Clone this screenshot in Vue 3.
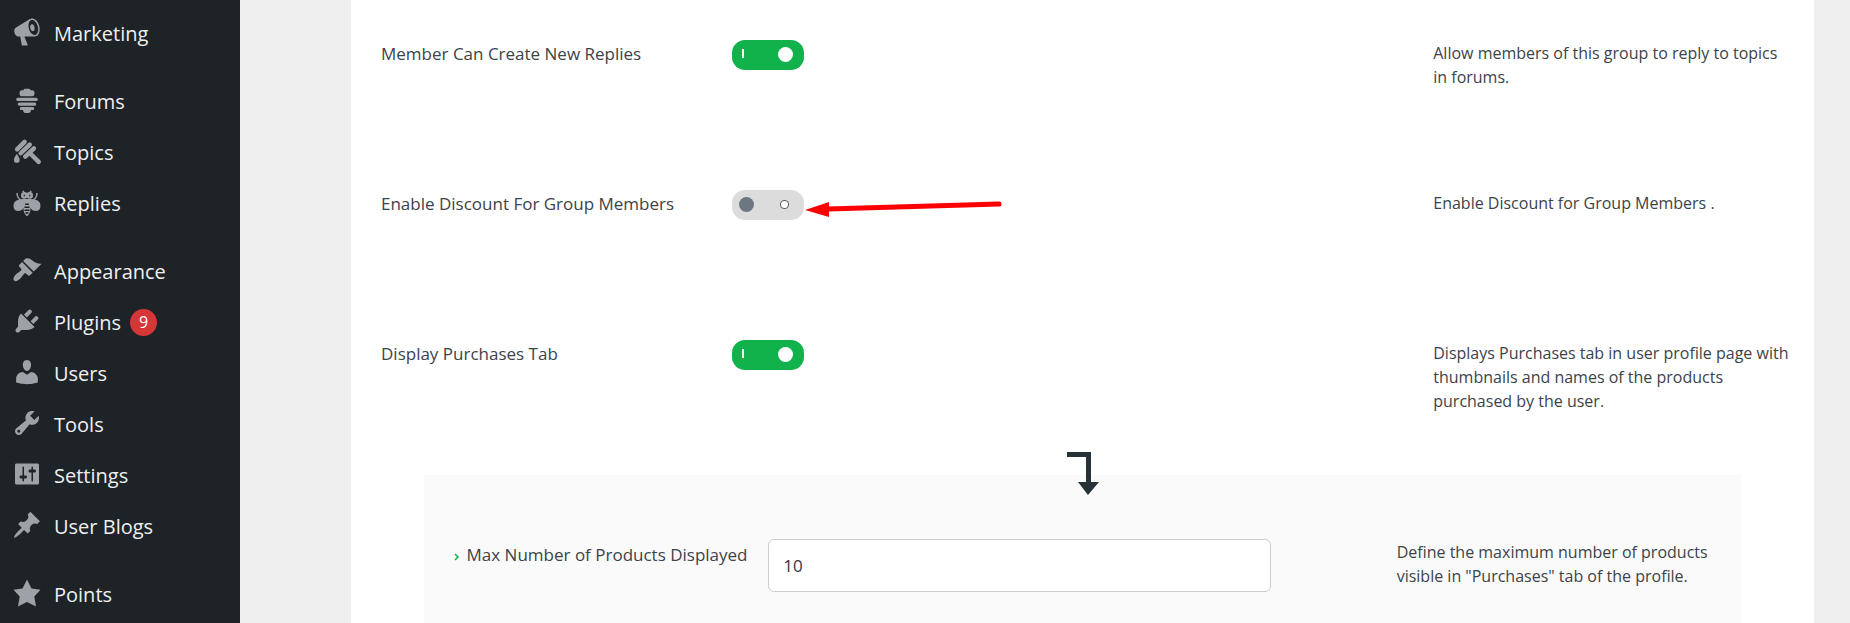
<script setup>
import { ref } from 'vue';

const menuGroups = [
  [{ id: 'marketing', label: 'Marketing' }],
  [
    { id: 'forums', label: 'Forums' },
    { id: 'topics', label: 'Topics' },
    { id: 'replies', label: 'Replies' },
  ],
  [
    { id: 'appearance', label: 'Appearance' },
    { id: 'plugins', label: 'Plugins', count: 9 },
    { id: 'users', label: 'Users' },
    { id: 'tools', label: 'Tools' },
    { id: 'settings', label: 'Settings' },
    { id: 'blogs', label: 'User Blogs' },
  ],
  [{ id: 'points', label: 'Points' }],
];

// 20x20 icons
const icons = {
  marketing: 'M18.15 5.94c.46 1.62.38 3.22-.02 4.48-.42 1.28-1.26 2.18-2.3 2.48-.16.06-.26.06-.4.06-.06.02-.12.02-.18.02-.06.02-.14.02-.22.02h-6.8l2.22 5.5c.02.14-.06.26-.14.34-.08.1-.24.16-.34.16H6.95c-.1 0-.26-.06-.34-.16-.08-.08-.16-.2-.14-.34l-1-5.5H4.25l-.02-.02c-.5.06-1.08-.18-1.54-.62s-.88-1.08-1.06-1.88c-.24-.8-.2-1.56-.02-2.2.18-.62.58-1.08 1.06-1.3l.02-.02 9-5.4c.1-.06.18-.1.24-.16.06-.04.14-.08.24-.12.16-.08.28-.12.5-.18 1.04-.3 2.24.1 3.22.98s1.84 2.24 2.26 3.86zm-2.58 5.98h-.02c.4-.1.74-.34 1.04-.7.58-.7.86-1.76.86-3.04 0-.64-.1-1.3-.28-1.98-.34-1.36-1.02-2.5-1.78-3.24s-1.68-1.1-2.46-.88c-.82.22-1.4.96-1.7 2-.32 1.04-.28 2.36.06 3.72.38 1.36 1 2.5 1.8 3.24.78.74 1.62 1.1 2.48.88zm-2.54-7.08c.22-.04.42-.02.62.04.38.16.76.48 1.02 1s.42 1.2.42 1.78c0 .3-.04.56-.12.8-.18.48-.44.84-.86.94-.34.1-.8-.06-1.14-.4s-.64-.86-.78-1.5c-.18-.62-.12-1.24.02-1.72s.48-.84.82-.94z',
  appearance: 'M14.48 11.06L7.41 3.99l1.5-1.5c.5-.56 2.3-.47 3.51.32 1.21.8 1.43 1.28 2.91 2.1 1.18.64 2.45 1.26 4.45.85zm-.71.71L6.7 4.7 4.93 6.47c-.39.39-.39 1.02 0 1.41l1.06 1.06c.39.39.39 1.03 0 1.42-.6.6-1.43 1.11-2.21 1.69-.35.26-.7.53-1.01.84C1.43 14.23.4 16.08 1.4 17.07c.99 1 2.84-.03 4.18-1.36.31-.31.58-.66.85-1.02.57-.78 1.08-1.61 1.69-2.21.39-.39 1.02-.39 1.41 0l1.06 1.06c.39.39 1.02.39 1.41 0z',
  plugins: 'M13.11 4.36L9.87 7.6 8 5.73l3.24-3.24c.35-.34 1.05-.2 1.56.32.52.51.66 1.21.31 1.55zm-8 1.77l.91-1.12 9.01 9.01-1.19.84c-.71.71-2.63 1.16-3.82 1.16H6.14L4.9 17.26c-.59.59-1.54.59-2.12 0-.59-.58-.59-1.53 0-2.12l1.24-1.24v-3.88c0-1.13.4-3.19 1.09-3.89zm7.26 3.97l3.24-3.24c.34-.35 1.04-.21 1.55.31.52.51.66 1.21.31 1.55l-3.24 3.25z',
  users: 'M10 9.25c-2.27 0-2.73-3.44-2.73-3.44C7 4.02 7.82 2 9.97 2c2.16 0 2.98 2.02 2.71 3.81 0 0-.41 3.44-2.68 3.44zm0 2.57L12.72 10c2.39 0 4.52 2.33 4.52 4.53v2.49s-3.65 1.13-7.24 1.13c-3.65 0-7.24-1.13-7.24-1.13v-2.49c0-2.25 1.94-4.48 4.47-4.48z',
  tools: 'M16.68 9.77c-1.34 1.34-3.3 1.67-4.95.99l-5.41 6.52c-.99.99-2.59.99-3.58 0s-.99-2.59 0-3.57l6.52-5.42c-.68-1.65-.35-3.61.99-4.95 1.28-1.28 3.12-1.62 4.72-1.06l-2.89 2.89 2.82 2.82 2.86-2.87c.53 1.58.18 3.39-1.08 4.65zM3.81 16.21c.4.39 1.04.39 1.43 0 .4-.4.4-1.04 0-1.43-.39-.4-1.03-.4-1.43 0-.39.39-.39 1.03 0 1.43z',
  settings: 'M18 16V4c0-.55-.45-1-1-1H3c-.55 0-1 .45-1 1v12c0 .55.45 1 1 1h14c.55 0 1-.45 1-1zM8 11h1c.55 0 1 .45 1 1s-.45 1-1 1H8v1.5c0 .28-.22.5-.5.5s-.5-.22-.5-.5V13H6c-.55 0-1-.45-1-1s.45-1 1-1h1V5.5c0-.28.22-.5.5-.5s.5.22.5.5V11zm5-2h-1c-.55 0-1-.45-1-1s.45-1 1-1h1V5.5c0-.28.22-.5.5-.5s.5.22.5.5V7h1c.55 0 1 .45 1 1s-.45 1-1 1h-1v5.5c0 .28-.22.5-.5.5s-.5-.22-.5-.5V9z',
  blogs: 'M10.44 3.02l1.82-1.82 6.36 6.35-1.83 1.82c-1.05-.68-2.48-.57-3.41.36l-.75.75c-.92.93-1.04 2.35-.35 3.41l-1.83 1.82-2.41-2.41-2.8 2.79c-.42.42-3.38 2.71-3.8 2.29s1.86-3.39 2.28-3.81l2.79-2.79L4.1 9.36l1.83-1.82c1.05.69 2.48.57 3.4-.36l.75-.75c.93-.92 1.05-2.35.36-3.41z',
  points: 'M10 1l3 6 6 .75-4.12 4.62L16 19l-6-3-6 3 1.13-6.63L1 7.75 7 7z',
};

const options = ref([
  {
    id: 'create-replies',
    label: 'Member Can Create New Replies',
    enabled: true,
    description: 'Allow members of this group to reply to topics in forums.',
  },
  {
    id: 'group-discount',
    label: 'Enable Discount For Group Members',
    enabled: false,
    highlighted: true,
    description: 'Enable Discount for Group Members .',
  },
  {
    id: 'purchases-tab',
    label: 'Display Purchases Tab',
    enabled: true,
    description: 'Displays Purchases tab in user profile page with thumbnails and names of the products purchased by the user.',
  },
]);

const maxProducts = ref('10');
</script>

<template>
  <div class="admin">
    <nav class="sidebar">
      <ul v-for="(group, index) in menuGroups" :key="index" class="menu-group">
        <li v-for="item in group" :key="item.id">
          <a href="#" class="menu-link">
            <svg class="menu-icon" viewBox="0 0 20 20" aria-hidden="true">
              <!-- Beehive -->
              <g v-if="item.id === 'forums'">
                <path d="M8.5 2.500h3q.8 0 .8 1h1.200q1.500 0 1.500 2t-1.500 2h-7Q5 7.500 5 5.500t1.500-2h1.200q0-1 .8-1z" />
                <rect x="2.800" y="8.500" width="14.400" height="2.200" rx="1.100" />
                <rect x="3.800" y="11.600" width="12.400" height="2.200" rx="1.100" />
                <path d="M6.200 14.700h7.600q1 0 1 1t-1 1h-1.200q0 2-1.600 2H9q-1.600 0-1.600-2H6.200q-1 0-1-1t1-1z" />
              </g>
              <!-- Honey dipper -->
              <g v-else-if="item.id === 'topics'">
                <path
                  d="M3.400 8.900l5-5M5.800 11.500l6-5.800M8.800 13.700l5.800-5.500M12.500 12l5.300 5.300"
                  fill="none"
                  stroke="currentColor"
                  stroke-linecap="round"
                  stroke-width="3"
                />
                <path d="M3.200 11.800c1 1.700 1.900 2.900 1.900 4.200a1.900 1.900 0 0 1-3.800 0c0-1.300.9-2.500 1.900-4.200z" />
              </g>
              <!-- Bee -->
              <g v-else-if="item.id === 'replies'">
                <path d="M9 8Q1 7.500 1 12.500 1 16 4.200 16q2.400 0 3.400-2 .2 4.200 2.400 5.500 2.200-1.300 2.400-5.500 1 2 3.400 2Q19 16 19 12.500 19 7.500 11 8z" />
                <circle cx="8.200" cy="5.600" r="2.200" />
                <circle cx="11.800" cy="5.600" r="2.200" />
                <path d="M8 3.800L7.300 2.500M12 3.800l.7-1.300M3.300 4q.2 4 4 5.500M16.700 4q-.2 4-4 5.500" fill="none" stroke="currentColor" />
                <path class="bee-marks" d="M8.800 11.500h2.400M8.300 13.500h3.400M8.300 15.500h3.400M9 17.300h2M7.800 5.600h.8M11.400 5.600h.8" />
              </g>
              <path v-else :d="icons[item.id]" fill-rule="evenodd" />
            </svg>
            <span>{{ item.label }}</span>
            <span v-if="item.count" class="menu-count">{{ item.count }}</span>
          </a>
        </li>
      </ul>
    </nav>

    <main class="panel">
      <div v-for="option in options" :key="option.id" class="option-row">
        <label class="option-label" :for="option.id">{{ option.label }}</label>
        <div class="switch">
          <input :id="option.id" v-model="option.enabled" type="checkbox" />
          <svg v-if="option.highlighted" class="pointer-arrow" viewBox="0 0 200 24" aria-hidden="true">
            <path d="M24 13L195 8" stroke="#f00" stroke-width="5" stroke-linecap="round" />
            <path d="M1 14L25 6v15z" fill="#f00" />
          </svg>
        </div>
        <p class="option-description">{{ option.description }}</p>
      </div>

      <section class="sub-options">
        <svg class="turn-arrow" viewBox="0 0 34 44" aria-hidden="true">
          <path d="M1 0h24v30h8L22 43 12 30h8V5H1z" />
        </svg>
        <label class="option-label" for="max-products">
          <svg class="chevron" viewBox="0 0 6 8" aria-hidden="true"><path d="M1 1l3 3-3 3" /></svg>
          Max Number of Products Displayed
        </label>
        <input id="max-products" v-model="maxProducts" class="text-field" type="text" />
        <p class="option-description">Define the maximum number of products visible in "Purchases" tab of the profile.</p>
      </section>
    </main>
  </div>
</template>

<style>
body {
  margin: 0;
  overflow: hidden;
  background: #efefef;
}
</style>

<style scoped>
.admin {
  display: flex;
  min-height: 100vh;
  font-family: 'Open Sans', 'Noto Sans', sans-serif;
  color: #3c434a;
}

/* Sidebar */
.sidebar {
  flex: 0 0 240px;
  box-sizing: border-box;
  padding-top: 8px;
  background: #1d2327;
}
.menu-group {
  margin: 0 0 17px;
  padding: 0;
  list-style: none;
}
.menu-group:last-child {
  margin-bottom: 0;
}
.menu-link {
  display: flex;
  align-items: center;
  height: 51px;
  padding-left: 12px;
  color: #f0f0f1;
  font-size: 20px;
  text-decoration: none;
}
.menu-icon {
  width: 30px;
  height: 30px;
  margin: 0 12px 4px 0;
  color: #9ca2a7;
  fill: currentColor;
}
.bee-marks {
  stroke: #1d2327;
  stroke-width: 1;
}
.menu-count {
  width: 27px;
  height: 27px;
  margin-left: 9px;
  border-radius: 50%;
  background: #d63638;
  color: #fff;
  font-size: 16px;
  line-height: 27px;
  text-align: center;
}

/* Settings */
.panel {
  flex: 1;
  margin: 0 36px 0 111px;
  padding-top: 40px;
  background: #fff;
}
.option-row {
  display: grid;
  grid-template-columns: 1fr 2fr 1fr;
  min-height: 150px;
  padding: 0 30px;
}
.option-label {
  font-size: 17px;
  line-height: 28px;
}
.option-description {
  margin: 0 -8px 0 0;
  padding-top: 1px;
  font-size: 16px;
  line-height: 24px;
}
.switch {
  position: relative;
  width: 72px;
  height: 30px;
}
.switch input {
  appearance: none;
  position: relative;
  display: block;
  width: 72px;
  height: 30px;
  margin: 0;
  border-radius: 13px;
  background: #dcdcdc;
  cursor: pointer;
}
.switch input::before,
.switch input::after {
  content: '';
  position: absolute;
  box-sizing: border-box;
}
.switch input::before {
  top: 7px;
  left: 7px;
  width: 15px;
  height: 15px;
  border-radius: 50%;
  background: #6c7781;
}
.switch input::after {
  top: 10px;
  left: 48px;
  width: 9px;
  height: 9px;
  border: 1px solid #555d66;
  border-radius: 4px;
  background: #fff;
}
.switch input:checked {
  background: #11b24c;
}
.switch input:checked::before {
  left: 46px;
  background: #fff;
}
.switch input:checked::after {
  top: 9px;
  left: 10px;
  width: 2px;
  border: 0;
  border-radius: 0;
}
.pointer-arrow {
  position: absolute;
  top: 6px;
  left: 72px;
  width: 200px;
  height: 24px;
}

/* Nested options */
.sub-options {
  position: relative;
  display: grid;
  grid-template-columns: 25% 40% 10% 25%;
  align-items: start;
  min-height: 148px;
  margin: -15px 5% 0;
  padding: 64px 30px 0;
  box-sizing: border-box;
  background: #fafafa;
}
.sub-options .option-label {
  padding-top: 2px;
}
.sub-options .option-description {
  grid-column: 4;
}
.turn-arrow {
  position: absolute;
  top: -23px;
  left: calc(50% - 17px);
  width: 34px;
  height: 44px;
  fill: #263238;
}
.chevron {
  width: 6px;
  height: 8px;
  margin-right: 2px;
  fill: none;
  stroke: #11b24c;
  stroke-width: 1.5;
}
.text-field {
  box-sizing: border-box;
  width: 100%;
  height: 53px;
  padding: 0 14px;
  border: 1px solid #ccc;
  border-radius: 6px;
  background: #fff;
  color: #32373c;
  font-family: inherit;
  font-size: 17px;
}
</style>
